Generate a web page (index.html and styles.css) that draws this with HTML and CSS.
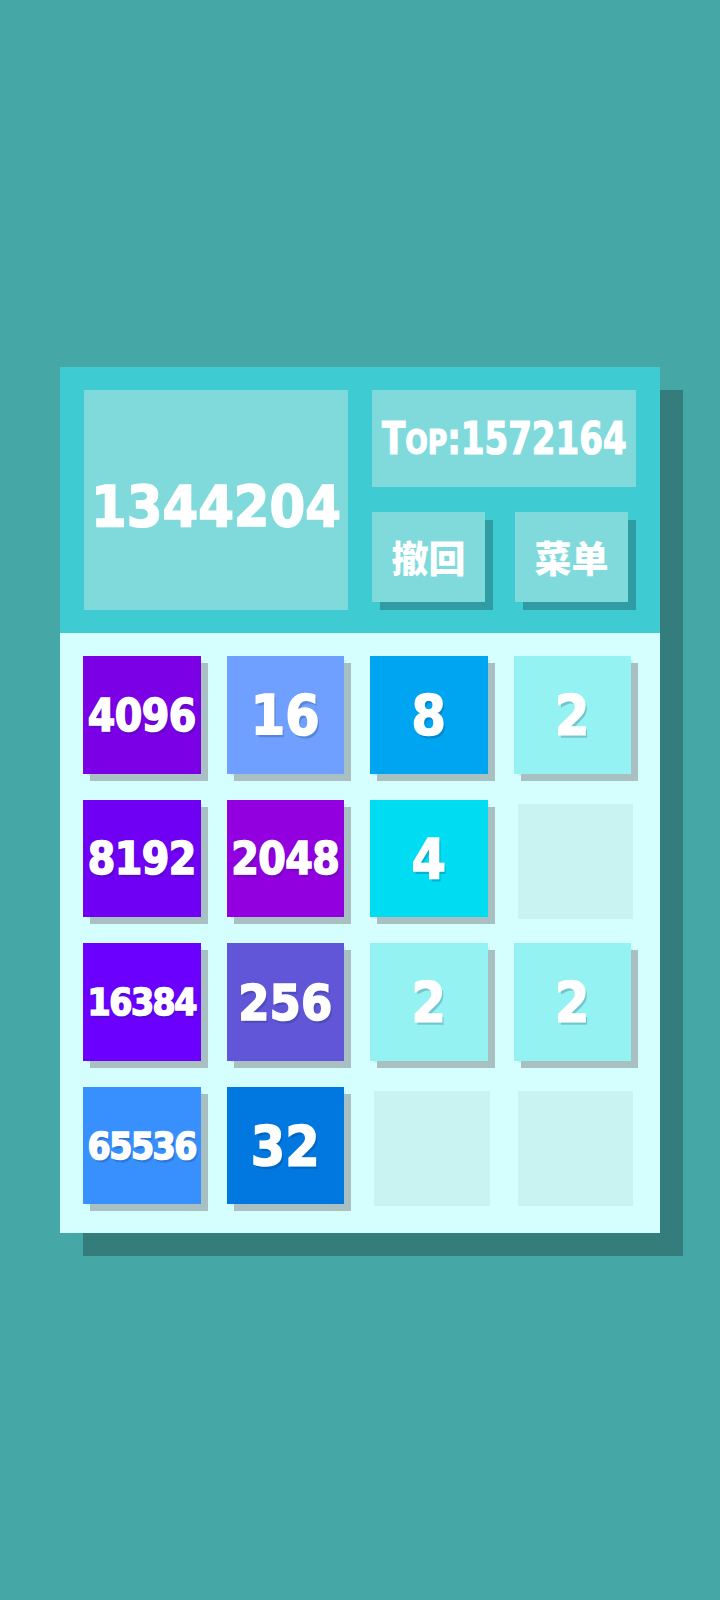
FILE: index.html
```html
<!DOCTYPE html>
<html lang="zh">
<head>
<meta charset="utf-8">
<title>2048</title>
<link rel="stylesheet" href="styles.css">
</head>
<body>
<main class="game">
  <header class="hud">
    <div class="score-box"><span class="score">1344204</span></div>
    <div class="side">
      <div class="best"><span class="best-label">T<span class="sc">op</span>:1572164</span></div>
      <div class="actions">
        <button class="btn">撤回</button>
        <button class="btn">菜单</button>
      </div>
    </div>
  </header>
  <section class="board">
    <div class="cell"><div class="tile v4096 d4">4096</div></div>
    <div class="cell"><div class="tile v16 d2">16</div></div>
    <div class="cell"><div class="tile v8 d1">8</div></div>
    <div class="cell"><div class="tile v2 d1">2</div></div>

    <div class="cell"><div class="tile v8192 d4">8192</div></div>
    <div class="cell"><div class="tile v2048 d4">2048</div></div>
    <div class="cell"><div class="tile v4 d1">4</div></div>
    <div class="cell"></div>

    <div class="cell"><div class="tile v16384 d5">16384</div></div>
    <div class="cell"><div class="tile v256 d3">256</div></div>
    <div class="cell"><div class="tile v2 d1">2</div></div>
    <div class="cell"><div class="tile v2 d1">2</div></div>

    <div class="cell"><div class="tile v65536 d5">65536</div></div>
    <div class="cell"><div class="tile v32 d2">32</div></div>
    <div class="cell"></div>
    <div class="cell"></div>
  </section>
</main>
</body>
</html>
```
FILE: styles.css
```css
html, body {
  margin: 0;
  padding: 0;
}

body {
  background: #46a7a7;
  min-height: 1600px;
  font-family: "DejaVu Sans Condensed", "DejaVu Sans", sans-serif;
  font-stretch: semi-condensed;
  color: #fff;
  overflow: hidden;
}

.game {
  width: 600px;
  margin: 367px auto 0;
  box-shadow: 23px 23px 0 #357d7d;
}

/* top bar: current score, best score and the two buttons */
.hud {
  background: #3ecbd2;
  padding: 23px 24px;
  height: 220px;
  display: grid;
  grid-template-columns: 264px 264px;
  column-gap: 24px;
}

.score-box {
  background: #80dadc;
  display: flex;
  align-items: center;
  justify-content: center;
}

.score {
  font-weight: bold;
  font-size: 57px;
  line-height: 1;
  padding-top: 14px;
  -webkit-text-stroke: 1.5px #fff;
}

.side {
  display: flex;
  flex-direction: column;
  gap: 25px;
}

.best {
  height: 97px;
  background: #80dadc;
  display: flex;
  align-items: center;
  justify-content: center;
  overflow: hidden;
}

.best-label {
  display: inline-block;
  font-weight: bold;
  font-size: 44px;
  line-height: 1;
  white-space: nowrap;
  transform: scaleX(0.86);
  -webkit-text-stroke: 1.2px #fff;
}

.best-label .sc {
  text-transform: uppercase;
  font-size: 0.78em;
}

.actions {
  display: flex;
  justify-content: space-between;
  padding-right: 8px;
}

.btn {
  width: 113px;
  height: 90px;
  border: 0;
  margin: 0;
  padding: 0;
  background: #80dadc;
  box-shadow: 8px 8px 0 #2e9ca2;
  color: #fff;
  font-family: "Noto Sans CJK SC", sans-serif;
  font-weight: 900;
  font-size: 37px;
  line-height: 1;
  display: flex;
  align-items: center;
  justify-content: center;
}

.btn-label {
  display: inline-block;
}

/* playing field */
.board {
  background: #d5fefe;
  height: 600px;
  box-sizing: border-box;
  padding: 27px;
  display: grid;
  grid-template-columns: repeat(4, 1fr);
  grid-template-rows: repeat(4, 1fr);
  gap: 28px;
}

.cell {
  background: #c9f3f2;
}

.tile {
  width: calc(100% + 2px);
  height: calc(100% + 2px);
  transform: translate(-4px, -4px);
  box-shadow: 7px 7px 0 #a8c0c1;
  box-sizing: border-box;
  padding-top: 2px;
  display: flex;
  align-items: center;
  justify-content: center;
  font-weight: bold;
  line-height: 1;
  white-space: nowrap;
  -webkit-text-stroke: 1.5px #fff;
  text-shadow: 2px 3px 0 rgba(0, 40, 80, 0.22);
}

.d1, .d2 { font-size: 55px; }
.d3 { font-size: 50px; }
.d4 { font-size: 44px; letter-spacing: -0.5px; }
.d5 { font-size: 37px; letter-spacing: -1.5px; }

.v2 { background: #94f3f2; }
.v4 { background: #00dcf2; }
.v8 { background: #00a5f2; }
.v16 { background: #70a0ff; }
.v32 { background: #0078e0; }
.v256 { background: #6256d8; }
.v2048 { background: #9300e0; }
.v4096 { background: #7b00e6; }
.v8192 { background: #7000f4; }
.v16384 { background: #6b00ff; }
.v65536 { background: #3890ff; }
```
